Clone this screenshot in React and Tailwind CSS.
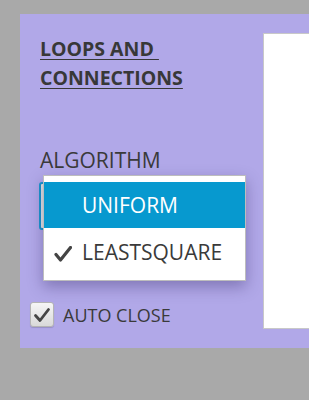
import React from "react";

export default function App() {
  return (
    <div
      className="w-[309px] h-[400px] bg-[#a9a9a9] pt-[14px] pl-[20px] overflow-hidden"
      style={{ fontFamily: '"Open Sans", "Noto Sans", sans-serif' }}
    >
      <div className="h-[334px] bg-[#b1a8e8] flex">
        {/* left column */}
        <div className="w-[243px] shrink-0 flex flex-col">
          <div className="mt-[20px] ml-[20px] text-[19.5px] leading-[29px] font-bold text-[#383838] underline underline-offset-[3px] decoration-[1px]">
            <div>LOOPS AND&nbsp;</div>
            <div>CONNECTIONS</div>
          </div>
          <div className="mt-[54px] ml-[20px] text-[21px] leading-[28px] text-[#3a3a3a]">
            ALGORITHM
          </div>
          {/* combobox */}
          <div className="relative mt-[8px] ml-[19px] w-[206px] h-[48px] rounded-[3px] border-2 border-[#1a97cf] bg-[#e6e6e6]">
            {/* popup */}
            <div className="absolute left-[2px] top-[-9px] w-[203px] bg-white border border-[#bdbdbd] shadow-[0_6px_14px_rgba(40,30,90,0.35)] pt-[6px] pb-[4px] z-10">
              <div className="h-[46px] bg-[#0799cf] flex items-center pt-[2px] pl-[38px] text-[21px] text-white">
                UNIFORM
              </div>
              <div className="h-[48px] flex items-center pt-[2px] text-[21px] text-[#3a3a3a] relative pl-[38px]">
                <svg
                  className="absolute left-[10px] top-[18px]"
                  width="18"
                  height="16"
                  viewBox="0 0 18 16"
                >
                  <path
                    d="M2 8.5 L6.5 14 L16.5 1.5"
                    fill="none"
                    stroke="#444"
                    strokeWidth="3.2"
                    strokeLinecap="round"
                    strokeLinejoin="round"
                  />
                </svg>
                LEASTSQUARE
              </div>
            </div>
          </div>
          {/* auto close */}
          <div className="mt-[72px] ml-[10px] flex items-center gap-[9px]">
            <div className="w-[24px] h-[25px] rounded-[3px] border border-[#b4b4b4] bg-gradient-to-b from-[#f6f6f6] to-[#d9d9d9] shadow-[0_1px_1px_rgba(0,0,0,0.15)] flex items-center justify-center">
              <svg width="18" height="16" viewBox="0 0 18 16">
                <path
                  d="M2.5 8.5 L7 13.5 L15.5 2.5"
                  fill="none"
                  stroke="#454545"
                  strokeWidth="2.8"
                  strokeLinecap="round"
                  strokeLinejoin="round"
                />
              </svg>
            </div>
            <span className="text-[18px] leading-[24px] text-[#3a3a3a]">AUTO CLOSE</span>
          </div>
        </div>
        {/* right white box */}
        <div className="mt-[19px] h-[296px] flex-1 bg-white border-l border-t border-b border-[#c8c8c8]"></div>
      </div>
    </div>
  );
}
